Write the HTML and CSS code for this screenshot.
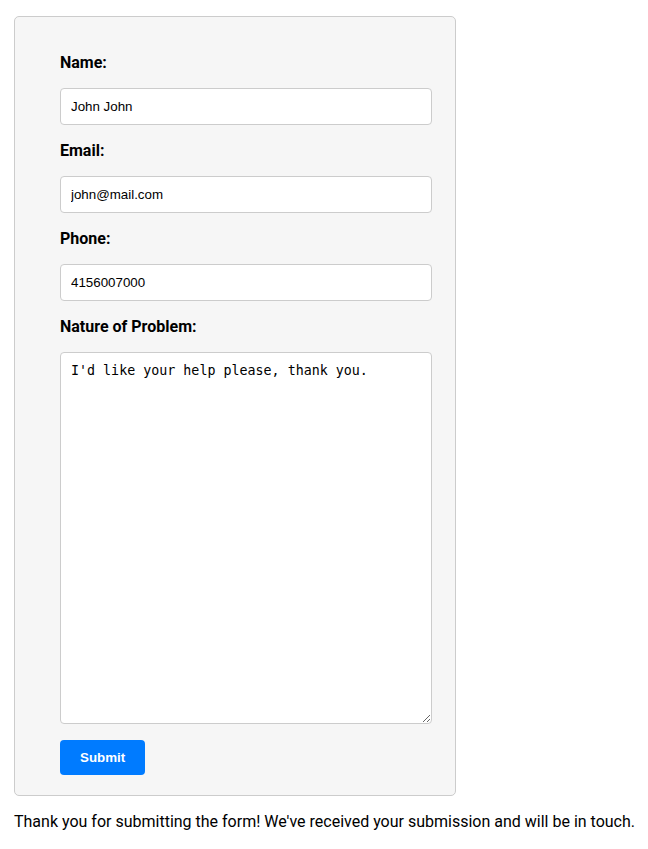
FILE: index.html
```html
<!DOCTYPE html>
<html lang="en">
<head>
<meta charset="utf-8">
<title>Contact form</title>
<link rel="stylesheet" href="styles.css">
</head>
<body>
<form class="contact-form">
  <label class="field-label" for="name">Name:</label>
  <input class="field-input" id="name" type="text" value="John John">
  <label class="field-label" for="email">Email:</label>
  <input class="field-input" id="email" type="email" value="john@mail.com">
  <label class="field-label" for="phone">Phone:</label>
  <input class="field-input" id="phone" type="tel" value="4156007000">
  <label class="field-label" for="problem">Nature of Problem:</label>
  <textarea class="field-textarea" id="problem">I'd like your help please, thank you.</textarea>
  <button class="submit-btn" type="button">Submit</button>
</form>
<p class="thanks">Thank you for submitting the form! We've received your submission and will be in touch.</p>
</body>
</html>
```

FILE: styles.css
```css
html, body {
  background: #ffffff;
}
body {
  margin: 0;
  padding: 16px 0 16px 14px;
  font-family: Roboto, "Liberation Sans", sans-serif;
  font-size: 16px;
  color: #000;
}
.contact-form {
  width: 442px;
  box-sizing: border-box;
  background: #f6f6f6;
  border: 1px solid #cccccc;
  border-radius: 5px;
  padding: 36px 23px 20px 45px;
  display: flex;
  flex-direction: column;
  align-items: flex-start;
}
.field-label {
  display: block;
  font-weight: 700;
  font-size: 16px;
  line-height: 19px;
  margin-bottom: 16px;
}
.field-input,
.field-textarea {
  width: 372px;
  box-sizing: border-box;
  border: 1px solid #cccccc;
  border-radius: 4px;
  background: #fff;
  padding: 10px;
  margin: 0 0 16px 0;
  color: #000;
}
.field-input {
  height: 37px;
  font-family: "Liberation Sans", Arial, sans-serif;
  font-size: 13.333px;
}
.field-textarea {
  height: 372px;
  font-family: "DejaVu Sans Mono", monospace;
  font-size: 13.333px;
  line-height: 16px;
  resize: vertical;
}
.submit-btn {
  height: 35px;
  padding: 0 20px;
  background: #007bff;
  color: #fff;
  border: none;
  border-radius: 4px;
  font-family: "Liberation Sans", Arial, sans-serif;
  font-size: 13.333px;
  font-weight: 700;
  width: 85px;
}
.thanks {
  margin: 16px 0 0 0;
  line-height: 19px;
  white-space: nowrap;
}
```
